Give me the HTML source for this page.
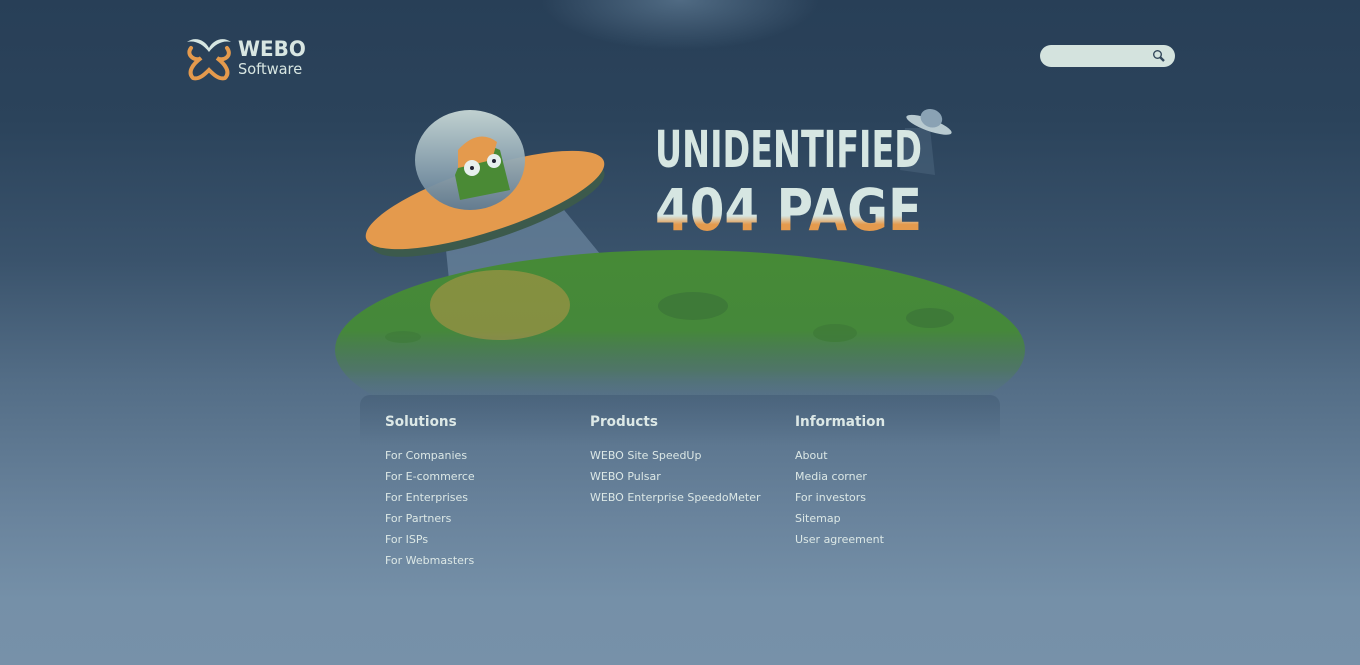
<!DOCTYPE html>
<html><head><meta charset="utf-8"><style>
html,body{margin:0;padding:0}
body{width:1360px;height:665px;overflow:hidden;position:relative;font-family:"DejaVu Sans","Liberation Sans",sans-serif;
background:linear-gradient(180deg,#283f57 0px,#2b435b 120px,#3a536c 260px,#536d86 380px,#6a849d 520px,#7590a8 600px,#7791a9 665px);}
.glow{position:absolute;left:540px;top:-50px;width:280px;height:100px;border-radius:50%;background:radial-gradient(ellipse at center,rgba(120,150,175,.5),rgba(60,85,110,0) 70%)}
.logo{position:absolute;left:238px;top:38px;color:#d8e6e2}
.logo b{display:block;font-size:21px;font-weight:bold;line-height:22px;transform:scaleX(.95);transform-origin:left}
.logo span{display:block;font-size:15px;line-height:18px;transform:scaleX(.97);transform-origin:left}
.search{position:absolute;left:1040px;top:45px;width:135px;height:22px;border-radius:11px;background:#d4e3de}
.t1,.t2{position:absolute;left:655px;font-weight:bold;color:#d6e6e2;white-space:nowrap;line-height:1;transform-origin:left}
.t1{top:125px;font-size:51px;transform:scaleX(.655)}
.t2{top:181px;font-size:58px;transform:scaleX(.86);background:linear-gradient(180deg,#d6e6e2 60%,#e49a4d 75%);-webkit-background-clip:text;background-clip:text;color:transparent}
.panel{position:absolute;left:360px;top:395px;width:640px;height:50px;border-radius:10px 10px 0 0;background:linear-gradient(180deg,rgba(60,85,110,.45),rgba(90,115,140,0))}
.col{position:absolute;top:413px;color:#dce8e6}
.col h3{margin:0 0 14px;font-size:14px;font-weight:bold;line-height:18px;transform:scaleX(.97);transform-origin:left}
.col a{display:block;font-size:11px;line-height:21px;color:#dce8e6;text-decoration:none;white-space:nowrap}
</style></head><body>
<div class="glow"></div>
<svg style="position:absolute;left:183px;top:34px" width="52" height="48" viewBox="0 0 52 48">
<g fill="none" stroke="#e49a4d" stroke-width="4" stroke-linecap="round">
<path d="M8 14 C2 22 14 28 18 24 C10 30 4 38 10 44 C16 46 22 40 26 36 C30 40 36 46 42 44 C48 38 42 30 34 24 C40 28 50 22 44 14"/>
</g>
<path d="M4 8 C12 2 22 6 26 14 C30 6 40 2 48 8 C40 6 32 10 26 18 C20 10 12 6 4 8Z" fill="#d6e6e2"/>
</svg>
<div class="logo"><b>WEBO</b><span>Software</span></div>
<div class="search"><svg style="position:absolute;left:112px;top:4px" width="14" height="14" viewBox="0 0 14 14"><circle cx="5.5" cy="5.5" r="3.8" fill="none" stroke="#34495c" stroke-width="1.4"/><path d="M8 8 L12 12" stroke="#34495c" stroke-width="2.4"/></svg></div>
<svg style="position:absolute;left:0;top:0" width="1360" height="400" viewBox="0 0 1360 400">
<defs>
<linearGradient id="pl" x1="0" y1="0" x2="0" y2="1"><stop offset="0" stop-color="#468a36"/><stop offset=".4" stop-color="#45883a"/><stop offset=".6" stop-color="#4d7e50" stop-opacity=".55"/><stop offset=".78" stop-color="#5a7590" stop-opacity="0"/></linearGradient>
<linearGradient id="dm" x1="0" y1="0" x2="0" y2="1"><stop offset="0" stop-color="#c8d8d6"/><stop offset="1" stop-color="#5d7a93"/></linearGradient>
</defs>
<polygon points="445,240 560,205 605,260 450,290" fill="#6a849d" opacity=".75"/>
<polygon points="905,128 930,128 935,175 900,170" fill="#4e6880" opacity=".5"/>
<ellipse cx="680" cy="350" rx="345" ry="100" fill="url(#pl)"/>
<ellipse cx="500" cy="305" rx="70" ry="35" fill="#e49a4d" opacity=".4"/>
<ellipse cx="693" cy="306" rx="35" ry="14" fill="#3e7a38"/>
<ellipse cx="835" cy="333" rx="22" ry="9" fill="#3e7a38" opacity=".8"/>
<ellipse cx="930" cy="318" rx="24" ry="10" fill="#3e7a38"/>
<ellipse cx="403" cy="337" rx="18" ry="6" fill="#3e7a38" opacity=".6"/>
<g transform="rotate(-18 485 200)">
<ellipse cx="485" cy="210" rx="122" ry="30" fill="#3c5a4c"/>
<ellipse cx="485" cy="200" rx="125" ry="32" fill="#e49a4d"/>
</g>
<ellipse cx="470" cy="160" rx="55" ry="50" fill="url(#dm)" opacity=".95"/>
<path d="M455 175 Q470 135 500 150 L510 190 L460 200Z" fill="#4a8a35"/>
<path d="M458 150 Q478 128 497 142 L492 160 L458 168Z" fill="#e49a4d"/>
<circle cx="472" cy="168" r="8" fill="#e8f0ee"/><circle cx="472" cy="168" r="2" fill="#223"/>
<circle cx="494" cy="161" r="7" fill="#e8f0ee"/><circle cx="494" cy="161" r="2" fill="#223"/>
<g transform="rotate(20 930 122)"><ellipse cx="930" cy="125" rx="24" ry="6" fill="#b8cad0"/><ellipse cx="930" cy="118" rx="11" ry="9" fill="#8aa2b4"/></g>
</svg>
<div class="t1">UNIDENTIFIED</div>
<div class="t2">404 PAGE</div>
<div class="panel"></div>
<div class="col" style="left:385px"><h3>Solutions</h3><a>For Companies</a><a>For E-commerce</a><a>For Enterprises</a><a>For Partners</a><a>For ISPs</a><a>For Webmasters</a></div>
<div class="col" style="left:590px"><h3>Products</h3><a>WEBO Site SpeedUp</a><a>WEBO Pulsar</a><a>WEBO Enterprise SpeedoMeter</a></div>
<div class="col" style="left:795px"><h3>Information</h3><a>About</a><a>Media corner</a><a>For investors</a><a>Sitemap</a><a>User agreement</a></div>
</body></html>
